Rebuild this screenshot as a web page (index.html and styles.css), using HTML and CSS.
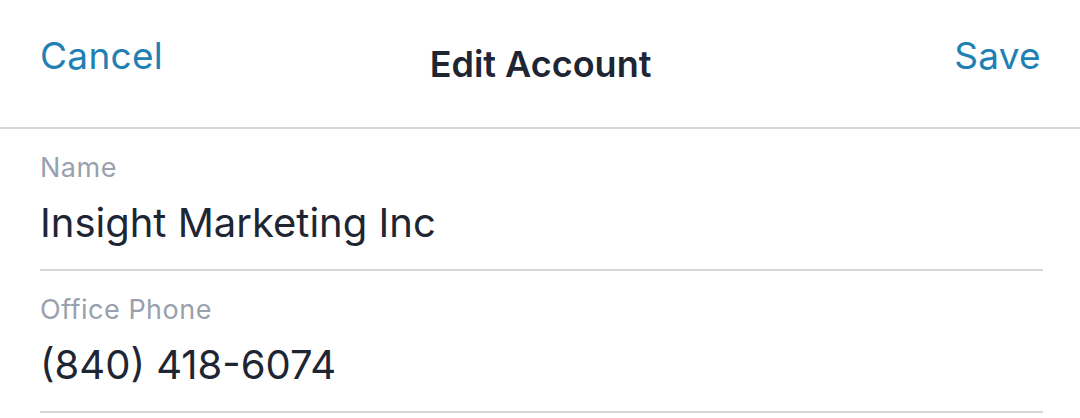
FILE: index.html
```html
<!DOCTYPE html>
<html lang="en">
<head>
    <meta charset="UTF-8">
    <meta name="viewport" content="width=device-width, initial-scale=1.0">
    <title>Edit Account</title>
    <link rel="stylesheet" href="styles.css">
</head>
<body>

    <div class="header">
        <a class="header-btn" href="#">Cancel</a>
        <h1 class="title">Edit Account</h1>
        <a class="header-btn save" href="#">Save</a>
    </div>

    <div class="form">
        <div class="field">
            <label for="name">Name</label>
            <div class="value" id="name">Insight Marketing Inc</div>
        </div>
        <div class="field">
            <label for="phone">Office Phone</label>
            <div class="value" id="phone">(840) 418-6074</div>
        </div>
    </div>

</body>
</html>
```

FILE: styles.css
```css
body {
    font-family: Inter, "Noto Sans", sans-serif;
    background-color: #fff;
    color: #1e2533;
    margin: 0;
    padding: 0;
}
.header {
    height: 129px;
    border-bottom: 2px solid #d5d5d7;
    display: grid;
    grid-template-columns: 1fr auto 1fr;
    align-items: center;
    padding: 0 39px 0 40px;
    box-sizing: border-box;
}
.header-btn {
    color: #1f80b4;
    text-decoration: none;
    font-size: 37px;
    letter-spacing: 0.3px;
    margin-top: -16px;
    justify-self: start;
}
.header-btn.save {
    justify-self: end;
}
.title {
    margin: 0;
    font-size: 36px;
    font-weight: 600;
    color: #1e2533;
}
.form {
    padding: 0 37px 0 40px;
}
.field {
    height: 142px;
    border-bottom: 2px solid #d5d6da;
    box-sizing: border-box;
    padding-top: 23px;
}
.field label {
    display: block;
    font-size: 27px;
    line-height: 32px;
    letter-spacing: 0.5px;
    color: #98a1ad;
}
.value {
    margin-top: 15px;
    font-size: 40px;
    line-height: 48px;
}
```
